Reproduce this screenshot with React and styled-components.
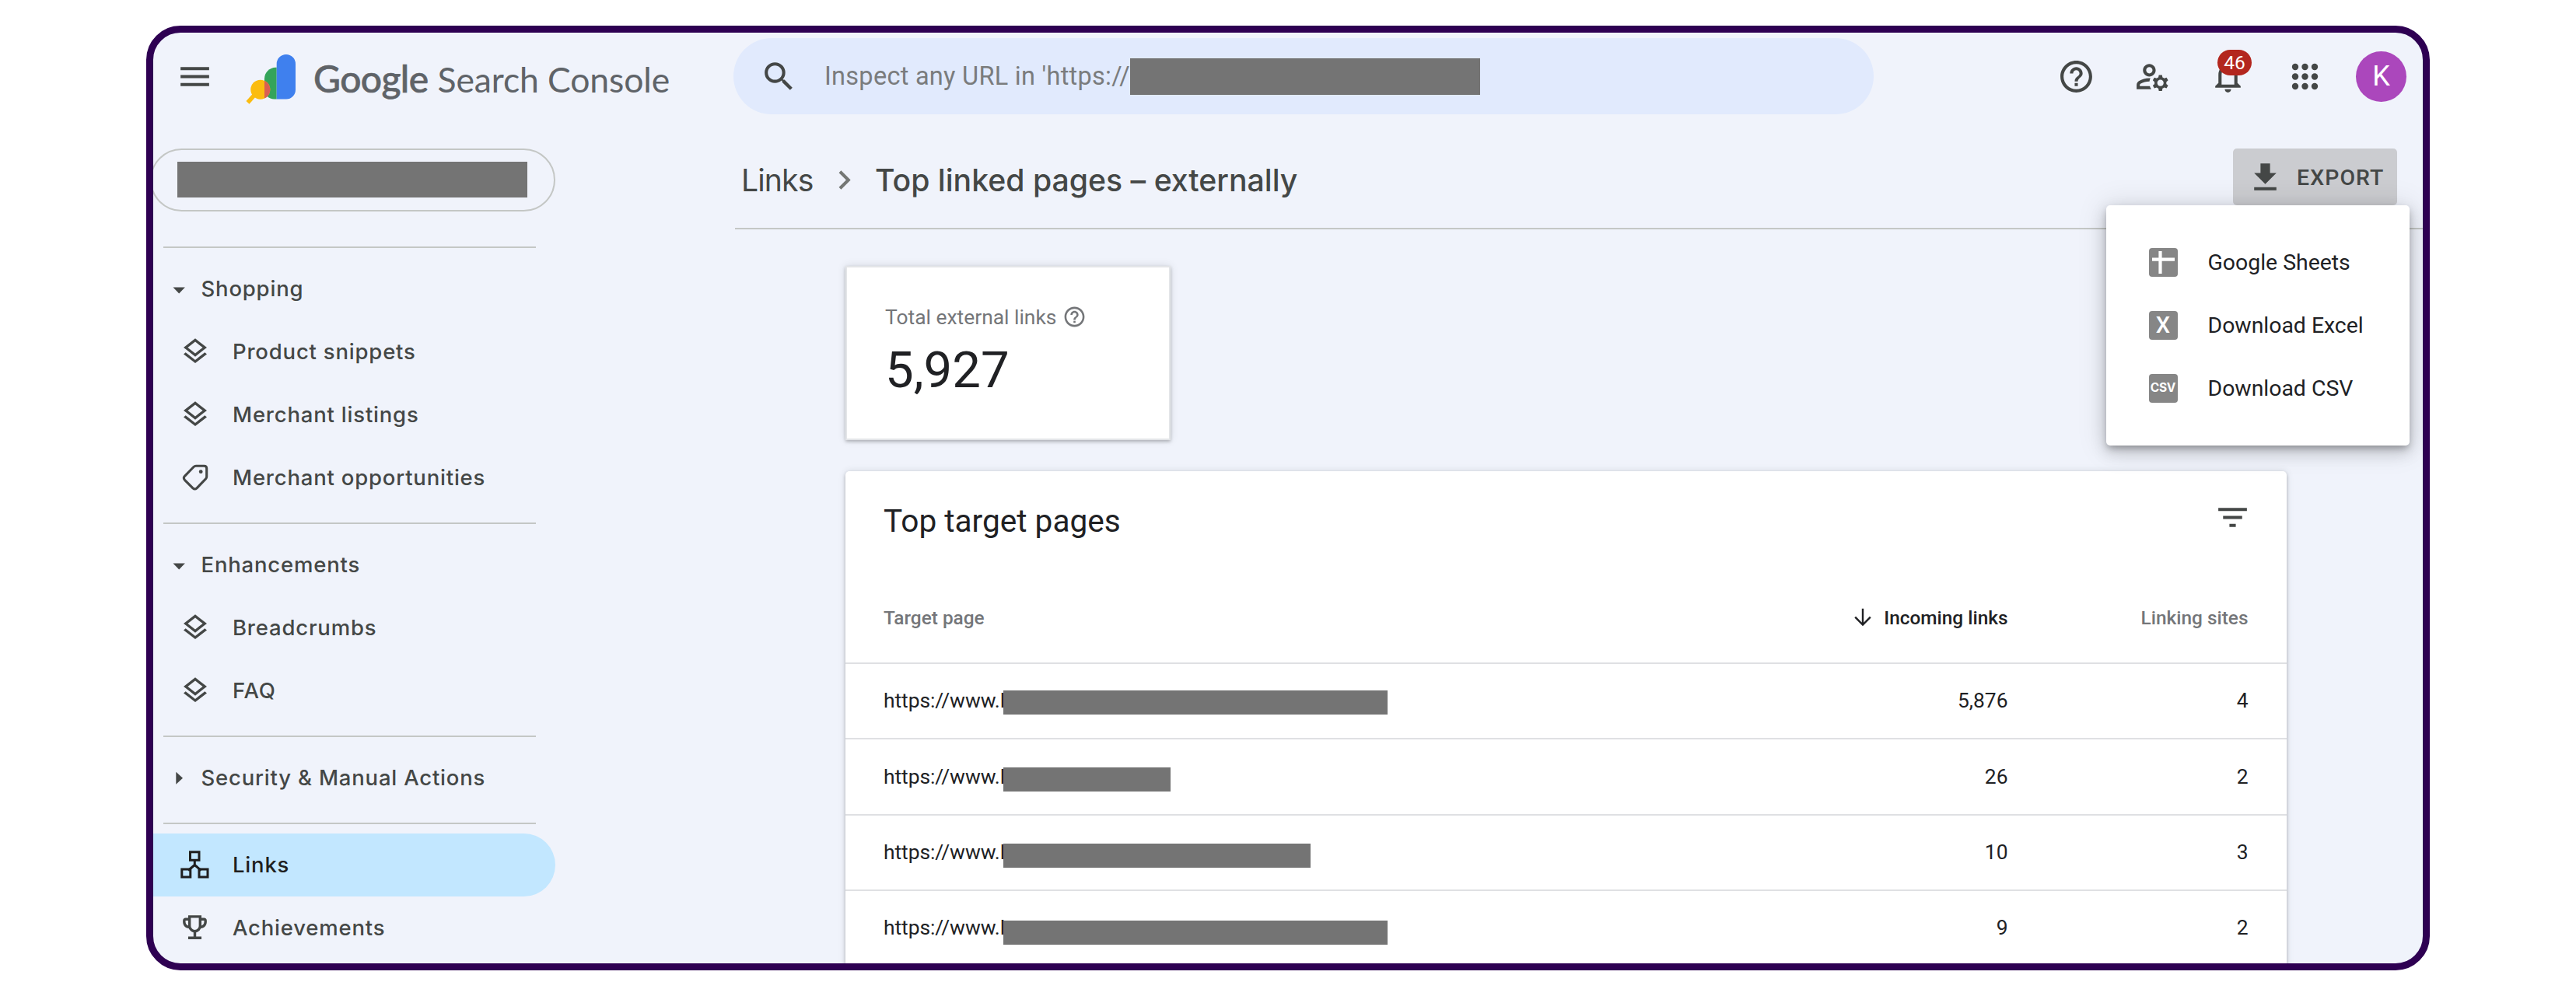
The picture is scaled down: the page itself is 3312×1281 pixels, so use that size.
import React from "react";
import styled, { createGlobalStyle, css } from "styled-components";
import {
  MdMenu,
  MdSearch,
  MdHelpOutline,
  MdOutlineManageAccounts,
  MdNotificationsNone,
  MdFileDownload,
  MdFilterList,
  MdChevronRight,
  MdOutlineLayers,
  MdOutlineEmojiEvents,
} from "react-icons/md";

const color = {
  frame: "#2e0052",
  page: "#f0f3fb",
  text: "#202124",
  strong: "#444746",
  muted: "#747679",
  line: "#c4c7c5",
  rowLine: "#dfe0e3",
  masked: "#747474",
};

const GlobalStyle = createGlobalStyle`
  *, *::before, *::after { box-sizing: border-box; }
  body {
    margin: 0;
    background: #fff;
    font-family: Roboto, "Liberation Sans", sans-serif;
    color: ${color.text};
  }
  svg { display: block; flex: none; }
`;

/* ---------- shell ---------- */

const Stage = styled.div`
  height: 1281px;
  padding: 33px 188px;
  overflow: hidden;
`;

const Frame = styled.div`
  height: 1214.5px;
  border: 9px solid ${color.frame};
  border-radius: 44px;
  background: ${color.page};
  overflow: hidden;
`;

const Header = styled.header`
  display: grid;
  grid-template-columns: 746px 1466px 1fr;
  align-items: center;
  height: 112px;
`;

const Columns = styled.div`
  display: grid;
  grid-template-columns: 748px minmax(0, 1fr);
  align-items: start;
`;

const Masked = styled.span`
  flex: none;
  width: ${(p) => p.$width}px;
  height: ${(p) => p.$height}px;
  margin-top: ${(p) => (p.$drop || 0) * 2}px;
  background: ${color.masked};
`;

/* ---------- header ---------- */

const Brand = styled.div`
  display: flex;
  align-items: center;
  padding-left: 29px;
  color: ${color.strong};
`;

const LogoMark = styled.svg`
  width: 66px;
  height: 68px;
  margin: 8px 0 0 40px;
`;

const Wordmark = styled.div`
  display: flex;
  align-items: baseline;
  gap: 12px;
  margin-left: 22px;
  padding-top: 6px;
  color: #5f6368;
  font-family: Lato, "Liberation Sans", sans-serif;
  line-height: 58px;
  white-space: nowrap;
`;

const WordmarkStrong = styled.span`
  font-size: 48px;
  font-weight: 500;
  letter-spacing: -0.6px;
  -webkit-text-stroke: 0.6px currentColor;
`;

const WordmarkLight = styled.span`
  font-size: 44.5px;
  font-weight: 400;
  letter-spacing: -0.12px;
`;

const SearchBar = styled.div`
  display: flex;
  align-items: center;
  height: 98px;
  padding-left: 34px;
  border-radius: 49px;
  background: #e1eafd;
  color: ${color.strong};
`;

const SearchHint = styled.span`
  width: 393px;
  margin-left: 34px;
  color: #7a7c7d;
  font-size: 32.5px;
  letter-spacing: 0.27px;
  white-space: nowrap;
`;

const HeaderTools = styled.div`
  display: flex;
  align-items: center;
  justify-content: flex-end;
  gap: 49px;
  padding-right: 21px;
  color: ${color.strong};
`;

const BellSlot = styled.div`
  position: relative;
  margin: 0 1px 0 -1px;
`;

const Badge = styled.span`
  position: absolute;
  top: -10px;
  left: 11px;
  display: grid;
  place-items: center;
  width: 44px;
  height: 33px;
  border-radius: 16.5px;
  background: #b3261e;
  color: #fff;
  font-size: 24.5px;
`;

const Avatar = styled.div`
  display: grid;
  place-items: center;
  width: 65px;
  height: 65px;
  margin-left: -8px;
  border-radius: 50%;
  background: #ab47bc;
  color: #fff;
  font-size: 36px;
`;

/* ---------- sidebar ---------- */

const Sidebar = styled.nav`
  width: 517px;
  padding-top: 37px;
`;

const PropertyPicker = styled.div`
  display: flex;
  align-items: center;
  width: 521px;
  height: 81px;
  margin: 0 0 45px -4px;
  padding: 0 0 1px 33px;
  border: 2px solid ${color.line};
  border-radius: 40.5px;
`;

const Divider = styled.hr`
  width: 479px;
  height: 2px;
  margin: 17px 0 12px 13px;
  border: 0;
  background: ${color.line};
`;

const navText = css`
  display: flex;
  align-items: center;
  height: 81px;
  padding-bottom: 2px;
  font-family: Inter, "Liberation Sans", sans-serif;
  font-size: 27.5px;
  font-weight: 500;
  letter-spacing: 0.8px;
  white-space: nowrap;
`;

const GroupTitle = styled.div`
  ${navText}
  padding-left: 19px;
  gap: 14.5px;
  color: ${color.strong};
`;

const NavItem = styled.div`
  ${navText}
  padding-left: 30px;
  gap: 25px;
  border-radius: 0 40.5px 40.5px 0;
  color: ${(p) => (p.$active ? "#1f1f1f" : color.strong)};
  background: ${(p) => (p.$active ? "#c2e7ff" : "transparent")};
`;

const NavIcon = styled.span`
  display: grid;
  place-items: center;
  width: 47px;
  height: 47px;
`;

/* ---------- main ---------- */

const Main = styled.main`
  min-width: 0;
`;

const TitleBar = styled.div`
  display: flex;
  justify-content: space-between;
  align-items: flex-start;
  height: 141px;
  padding: 37px 33.5px 0 8px;
  border-bottom: 2px solid ${color.line};
`;

const Crumbs = styled.div`
  display: flex;
  align-items: center;
  height: 81px;
  color: ${color.strong};
  font-family: Inter, "Liberation Sans", sans-serif;
  font-size: 39.2px;
  white-space: nowrap;
`;

const CrumbLink = styled.span`
  width: 92px;
  letter-spacing: -0.9px;
`;

const CrumbCurrent = styled.span`
  font-weight: 500;
`;

const CrumbArrow = styled.span`
  margin: 0 15px 0 16px;
  color: #747775;
`;

const ExportAnchor = styled.div`
  position: relative;
`;

const ExportButton = styled.button`
  display: flex;
  align-items: center;
  gap: 16px;
  width: 210.5px;
  height: 73px;
  padding: 1px 0 0 17px;
  border: 0;
  border-radius: 5px;
  background: #cbccd0;
  color: ${color.strong};
  font: 500 28.4px Roboto, "Liberation Sans", sans-serif;
  letter-spacing: 1.1px;
`;

const Menu = styled.div`
  position: absolute;
  z-index: 2;
  top: 73px;
  right: -16px;
  width: 390px;
  height: 308.5px;
  padding: 32.5px 0;
  border-radius: 5px;
  background: #fff;
  box-shadow:
    0 5px 10px -2px rgba(0, 0, 0, 0.3),
    0 8px 20px 2px rgba(0, 0, 0, 0.14),
    0 2px 36px 4px rgba(0, 0, 0, 0.1);
`;

const MenuItem = styled.div`
  display: flex;
  align-items: center;
  gap: 39px;
  height: 81px;
  padding-left: 55px;
  color: ${color.text};
  font-size: 28.4px;
  white-space: nowrap;
`;

const FileTile = styled.span`
  display: grid;
  place-items: center;
  width: 37px;
  height: 37px;
  border-radius: 4px;
  background: #868686;
  color: #fff;
  font-family: ${(p) => (p.$small ? "Inter" : "Roboto")}, "Liberation Sans", sans-serif;
  font-size: ${(p) => (p.$small ? 15.5 : 29)}px;
  font-weight: ${(p) => (p.$small ? 700 : 500)};
  line-height: 1;
  letter-spacing: ${(p) => (p.$small ? -0.3 : 0)}px;
`;

const Content = styled.div`
  display: flex;
  flex-direction: column;
  align-items: flex-start;
  gap: 40px;
  padding: 47px 0 0 142px;
`;

const shadow = css`
  box-shadow:
    0 2px 4px rgba(0, 0, 0, 0.24),
    0 0 10px rgba(60, 64, 67, 0.14);
`;

const TotalCard = styled.section`
  ${shadow}
  width: 418px;
  height: 224px;
  padding: 48px 0 0 49px;
  border: 2px solid #e3e5e8;
  background: #fff;
`;

const TotalLabel = styled.div`
  display: flex;
  align-items: center;
  gap: 8px;
  height: 31px;
  color: ${color.muted};
  font-size: 26.4px;
`;

const TotalValue = styled.div`
  margin-top: 21px;
  font-size: 65.3px;
  line-height: 64px;
`;

const TableCard = styled.section`
  ${shadow}
  width: 1852.5px;
  height: 760px;
  border-radius: 5px;
  background: #fff;
`;

const TableHead = styled.div`
  display: flex;
  align-items: center;
  justify-content: space-between;
  height: 128px;
  padding: 0 45px 0 49px;
`;

const TableTitle = styled.h2`
  margin: 0;
  font-size: 40.6px;
  font-weight: 400;
`;

const FilterButton = styled.span`
  padding-bottom: 10px;
  color: ${color.strong};
`;

const Row = styled.div`
  display: grid;
  grid-template-columns: 1fr 300px 309px;
  align-items: center;
  height: 97.35px;
  padding: 0 49px 1px 49px;
  border-bottom: 2px solid ${color.rowLine};
  font-size: 26.4px;
`;

const ColumnRow = styled(Row)`
  height: 120px;
  padding-top: 3px;
  font-size: 24.4px;
  font-weight: 500;
`;

const Cell = styled.div`
  display: flex;
  align-items: center;
  justify-content: ${(p) => (p.$number ? "flex-end" : "flex-start")};
  gap: 16px;
  color: ${(p) => (p.$muted ? color.muted : color.text)};
  white-space: nowrap;
`;

const UrlText = styled.span`
  width: 157px;
  margin-right: -3.5px;
  letter-spacing: -0.05px;
  white-space: nowrap;
`;

const UrlCell = styled.div`
  display: flex;
  align-items: center;
`;

/* ---------- drawings ---------- */

const Logo = () => (
  <LogoMark viewBox="315 68 66 68">
    <path d="M355.7 86.7h-1.200c-8 0-14.500 6.500-14.500 14.500v14c0 7 5.500 12.200 12.500 12.200h3.200z" fill="#34a45a" />
    <path d="M355.7 82.200a12.150 12.150 0 0 1 24.300 0v33.200a12 12 0 0 1-12 12h-12.300z" fill="#3f80ee" />
    <path d="M330 119l-11.500 12.800" stroke="#fbbc0f" strokeWidth="5.500" />
    <circle cx="334.800" cy="115.200" r="12.500" fill="#fbbc0f" />
    <path d="M340 103.800a12.500 12.500 0 0 1 0 22.800z" fill="#d95f52" />
  </LogoMark>
);

const AppsIcon = () => (
  <svg width="49" height="49" viewBox="0 0 49 49" fill="currentColor">
    {[12, 24.5, 37].map((y) => [12, 24.5, 37].map((x) => <circle key={`${x}-${y}`} cx={x} cy={y} r="4.200" />))}
  </svg>
);

const Caret = ({ open }) => (
  <svg width="28" height="28" viewBox="0 0 28 28" fill="currentColor">
    {open ? <path d="M6.500 12.500h15.400l-7.700 8z" /> : <path d="M10.300 6.800v16l8.700-8z" />}
  </svg>
);

const TagIcon = () => (
  <svg width="34" height="34" viewBox="0 0 34 34" fill="none" stroke="currentColor" strokeWidth="3.100" strokeLinejoin="round">
    <path d="M18 2.200h10.500q3.200 0 3.200 3.200V16q0 1.700-1.200 2.900L19 30.800q-2.500 2.300-5 0L3.500 20.300q-2.300-2.500 0-5L15 3.500q1.300-1.300 3-1.300z" />
    <circle cx="24.200" cy="9.700" r="2.400" fill="currentColor" stroke="none" />
  </svg>
);

const NetworkIcon = () => (
  <svg width="37" height="36" viewBox="0 0 37 36" fill="none" stroke="currentColor" strokeWidth="3">
    <rect x="12.500" y="1.800" width="11.500" height="10.500" />
    <rect x="1.800" y="24" width="11" height="10" />
    <rect x="24" y="24" width="11" height="10" />
    <path d="M18.300 12v6.500l-8.300 7M18.300 18.500l8.300 7" />
  </svg>
);

const SortArrow = () => (
  <svg width="22" height="24" viewBox="0 0 22 24" fill="none" stroke="currentColor" strokeWidth="2.400">
    <path d="M11 .8v20.500M1.200 11.700l9.800 9.800 9.800-9.800" />
  </svg>
);

const SheetGlyph = () => (
  <svg width="37" height="37" viewBox="0 0 37 37" stroke="#fff" strokeWidth="4.200">
    <path d="M14.500 4v29M4 14.700h29" />
  </svg>
);

/* ---------- data ---------- */

const layers = <MdOutlineLayers size={40} />;

const navGroups = [
  {
    title: "Shopping",
    open: true,
    items: [
      { label: "Product snippets", icon: layers },
      { label: "Merchant listings", icon: layers },
      { label: "Merchant opportunities", icon: <TagIcon /> },
    ],
  },
  {
    title: "Enhancements",
    open: true,
    items: [
      { label: "Breadcrumbs", icon: layers },
      { label: "FAQ", icon: layers },
    ],
  },
  { title: "Security & Manual Actions", open: false, items: [] },
];

const footerItems = [
  { label: "Links", icon: <NetworkIcon />, active: true },
  { label: "Achievements", icon: <MdOutlineEmojiEvents size={41} /> },
];

const exportOptions = [
  { label: "Google Sheets", tile: <SheetGlyph /> },
  { label: "Download Excel", tile: "X" },
  { label: "Download CSV", tile: "CSV", small: true },
];

const targetPages = [
  { masked: 494, drop: 2.5, links: "5,876", sites: "4" },
  { masked: 215, drop: 4, links: "26", sites: "2" },
  { masked: 395, drop: 4.5, links: "10", sites: "3" },
  { masked: 494, drop: 6, links: "9", sites: "2" },
];

export default function App() {
  return (
    <Stage>
      <GlobalStyle />
      <Frame>
        <Header>
          <Brand>
            <MdMenu size={49} />
            <Logo />
            <Wordmark>
              <WordmarkStrong>Google</WordmarkStrong>
              <WordmarkLight>Search Console</WordmarkLight>
            </Wordmark>
          </Brand>
          <SearchBar>
            <MdSearch size={49} />
            <SearchHint>Inspect any URL in 'https://</SearchHint>
            <Masked $width={450} $height={47} />
          </SearchBar>
          <HeaderTools>
            <MdHelpOutline size={49} />
            <MdOutlineManageAccounts size={49} />
            <BellSlot>
              <MdNotificationsNone size={49} />
              <Badge>46</Badge>
            </BellSlot>
            <AppsIcon />
            <Avatar>K</Avatar>
          </HeaderTools>
        </Header>

        <Columns>
          <Sidebar>
            <PropertyPicker>
              <Masked $width={450} $height={46} />
            </PropertyPicker>
            {navGroups.map((group) => (
              <React.Fragment key={group.title}>
                <Divider />
                <GroupTitle>
                  <Caret open={group.open} />
                  {group.title}
                </GroupTitle>
                {group.items.map((item) => (
                  <NavItem key={item.label}>
                    <NavIcon>{item.icon}</NavIcon>
                    {item.label}
                  </NavItem>
                ))}
              </React.Fragment>
            ))}
            <Divider />
            {footerItems.map((item) => (
              <NavItem key={item.label} $active={item.active}>
                <NavIcon>{item.icon}</NavIcon>
                {item.label}
              </NavItem>
            ))}
          </Sidebar>

          <Main>
            <TitleBar>
              <Crumbs>
                <CrumbLink>Links</CrumbLink>
                <CrumbArrow>
                  <MdChevronRight size={49} />
                </CrumbArrow>
                <CrumbCurrent>Top linked pages – externally</CrumbCurrent>
              </Crumbs>
              <ExportAnchor>
                <ExportButton>
                  <MdFileDownload size={49} />
                  EXPORT
                </ExportButton>
                <Menu>
                  {exportOptions.map((option) => (
                    <MenuItem key={option.label}>
                      <FileTile $small={option.small}>{option.tile}</FileTile>
                      {option.label}
                    </MenuItem>
                  ))}
                </Menu>
              </ExportAnchor>
            </TitleBar>

            <Content>
              <TotalCard>
                <TotalLabel>
                  Total external links
                  <MdHelpOutline size={31} />
                </TotalLabel>
                <TotalValue>5,927</TotalValue>
              </TotalCard>

              <TableCard>
                <TableHead>
                  <TableTitle>Top target pages</TableTitle>
                  <FilterButton>
                    <MdFilterList size={49} />
                  </FilterButton>
                </TableHead>
                <ColumnRow>
                  <Cell $muted>Target page</Cell>
                  <Cell $number>
                    <SortArrow />
                    Incoming links
                  </Cell>
                  <Cell $number $muted>
                    Linking sites
                  </Cell>
                </ColumnRow>
                {targetPages.map((page, index) => (
                  <Row key={index}>
                    <UrlCell>
                      <UrlText>https://www.l</UrlText>
                      <Masked $width={page.masked} $height={31} $drop={page.drop} />
                    </UrlCell>
                    <Cell $number>{page.links}</Cell>
                    <Cell $number>{page.sites}</Cell>
                  </Row>
                ))}
              </TableCard>
            </Content>
          </Main>
        </Columns>
      </Frame>
    </Stage>
  );
}
